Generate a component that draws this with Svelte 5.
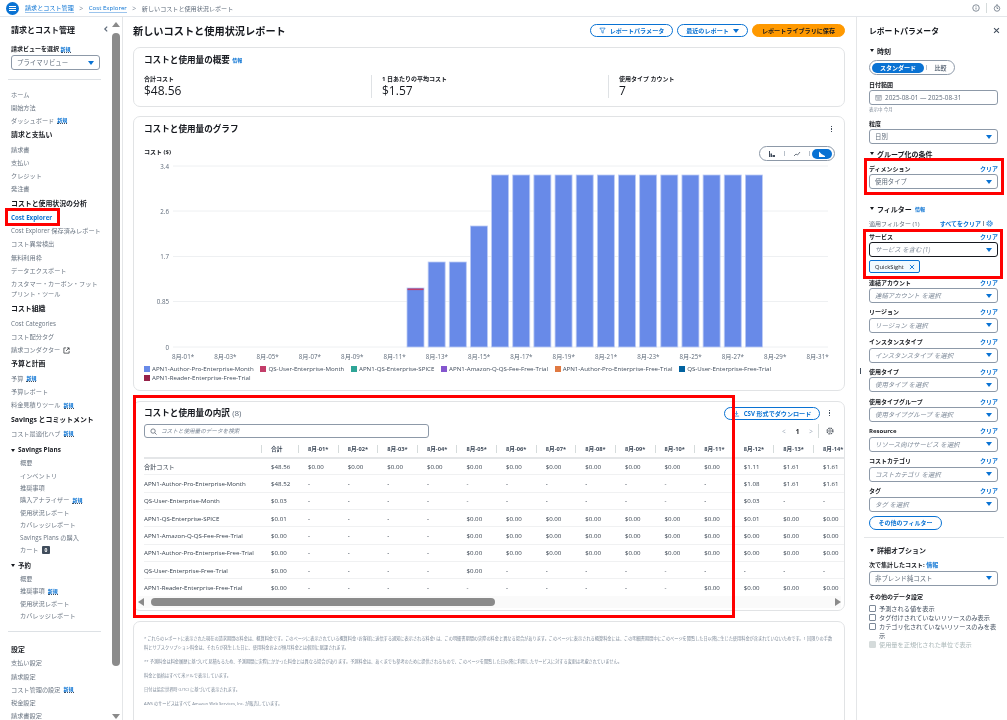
<script lang="ts">
  type NavRow = { t: string; kind?: 'head' | 'sub' | 'group' | 'active' | 'wrap'; isNew?: boolean; ext?: boolean; badge?: string };

  const nav: NavRow[] = [
    { t: 'ホーム' },
    { t: '開始方法' },
    { t: 'ダッシュボード', isNew: true },
    { t: '請求と支払い', kind: 'head' },
    { t: '請求書' },
    { t: '支払い' },
    { t: 'クレジット' },
    { t: '発注書' },
    { t: 'コストと使用状況の分析', kind: 'head' },
    { t: 'Cost Explorer', kind: 'active' },
    { t: 'Cost Explorer 保存済みレポート' },
    { t: 'コスト異常検出' },
    { t: '無料利用枠' },
    { t: 'データエクスポート' },
    { t: 'カスタマー・カーボン・フットプリント・ツール', kind: 'wrap' },
    { t: 'コスト組織', kind: 'head' },
    { t: 'Cost Categories' },
    { t: 'コスト配分タグ' },
    { t: '請求コンダクター', ext: true },
    { t: '予算と計画', kind: 'head' },
    { t: '予算', isNew: true },
    { t: '予算レポート' },
    { t: '料金見積りツール', isNew: true },
    { t: 'Savings とコミットメント', kind: 'head' },
    { t: 'コスト最適化ハブ', isNew: true },
    { t: 'Savings Plans', kind: 'group' },
    { t: '概要', kind: 'sub' },
    { t: 'インベントリ', kind: 'sub' },
    { t: '推奨事項', kind: 'sub' },
    { t: '購入アナライザー', kind: 'sub', isNew: true },
    { t: '使用状況レポート', kind: 'sub' },
    { t: 'カバレッジレポート', kind: 'sub' },
    { t: 'Savings Plans の購入', kind: 'sub' },
    { t: 'カート', kind: 'sub', badge: '0' },
    { t: '予約', kind: 'group' },
    { t: '概要', kind: 'sub' },
    { t: '推奨事項', kind: 'sub', isNew: true },
    { t: '使用状況レポート', kind: 'sub' },
    { t: 'カバレッジレポート', kind: 'sub' }
  ];

  const settings: NavRow[] = [
    { t: '支払い設定' },
    { t: '請求設定' },
    { t: 'コスト管理の設定', isNew: true },
    { t: '税金設定' },
    { t: '請求書設定' }
  ];

  const day = (n: number) => `8月-${String(n).padStart(2, '0')}*`;

  // chart
  const gridLines = [
    { label: '3.4', y: 165 },
    { label: '2.6', y: 210 },
    { label: '1.7', y: 255.5 },
    { label: '0.85', y: 300.5 },
    { label: '0', y: 346 }
  ];
  const barTops = [287, 261, 261, 225, ...Array(13).fill(174)];
  const axisDays = Array.from({ length: 16 }, (_, i) => i * 2 + 1);

  const legend = [
    ['APN1-Author-Pro-Enterprise-Month', '#688ae8'],
    ['QS-User-Enterprise-Month', '#c33d69'],
    ['APN1-QS-Enterprise-SPICE', '#2ea597'],
    ['APN1-Amazon-Q-QS-Fee-Free-Trial', '#8456ce'],
    ['APN1-Author-Pro-Enterprise-Free-Trial', '#e07941'],
    ['QS-User-Enterprise-Free-Trial', '#01629f'],
    ['APN1-Reader-Enterprise-Free-Trial', '#962249']
  ];

  // table
  const z = '$0.00';
  const d = '-';
  const rep = (v: string, n: number) => Array(n).fill(v);
  const rows = [
    ['合計コスト', '$48.56', ...rep(z, 11), '$1.11', '$1.61', '$1.61'],
    ['APN1-Author-Pro-Enterprise-Month', '$48.52', ...rep(d, 11), '$1.08', '$1.61', '$1.61'],
    ['QS-User-Enterprise-Month', '$0.03', ...rep(d, 11), '$0.03', d, d],
    ['APN1-QS-Enterprise-SPICE', '$0.01', ...rep(d, 4), ...rep(z, 7), '$0.01', z, z],
    ['APN1-Amazon-Q-QS-Fee-Free-Trial', z, ...rep(d, 4), ...rep(z, 10)],
    ['APN1-Author-Pro-Enterprise-Free-Trial', z, ...rep(d, 4), ...rep(z, 10)],
    ['QS-User-Enterprise-Free-Trial', z, ...rep(d, 4), z, ...rep(d, 9)],
    ['APN1-Reader-Enterprise-Free-Trial', z, ...rep(d, 10), ...rep(z, 4)]
  ];
  const tableDays = Array.from({ length: 14 }, (_, i) => day(i + 1));

  const filters = [
    ['連結アカウント', '連結アカウント を選択'],
    ['リージョン', 'リージョン を選択'],
    ['インスタンスタイプ', 'インスタンスタイプ を選択'],
    ['使用タイプ', '使用タイプ を選択'],
    ['使用タイプグループ', '使用タイプグループ を選択'],
    ['Resource', 'リソース向けサービス を選択'],
    ['コストカテゴリ', 'コストカテゴリ を選択'],
    ['タグ', 'タグ を選択']
  ];
</script>

{#snippet caret()}
  <i class="caret"></i>
{/snippet}

{#snippet newTag()}
  <span class="new">新規</span>
{/snippet}

{#snippet navRow(row: NavRow)}
  <li class={row.kind ?? 'item'}>
    {#if row.kind === 'group'}<i class="tri"></i>{/if}
    <span>{row.t}</span>
    {#if row.isNew}{@render newTag()}{/if}
    {#if row.ext}
      <svg class="ext" viewBox="0 0 16 16"><path d="M7 2H2v12h12V9M9 2h5v5M14 2L7 9" /></svg>
    {/if}
    {#if row.badge}<b class="badge">{row.badge}</b>{/if}
  </li>
{/snippet}

{#snippet filterField(label: string, value: string)}
  <div class="label-row"><b>{label}</b><a href="#clear">クリア</a></div>
  <div class="select"><em>{value}</em>{@render caret()}</div>
{/snippet}

<div class="page">
  <header class="topbar">
    <div class="burger"><i></i><i></i><i></i></div>
    <a class="crumb" href="#billing">請求とコスト管理</a>
    <span class="sep">&gt;</span>
    <a class="crumb" href="#ce">Cost Explorer</a>
    <span class="sep">&gt;</span>
    <span class="crumb-now">新しいコストと使用状況レポート</span>
    <div class="top-icons">
      <svg viewBox="0 0 16 16"><circle cx="8" cy="8" r="6.5" /><path d="M8 7v4M8 4.6v1.2" /></svg>
      <span class="top-div"></span>
      <svg viewBox="0 0 16 16"><circle cx="8" cy="9" r="5.5" /><path d="M8 6v3h2.5M6 2h4" /></svg>
    </div>
  </header>

  <div class="shell">
    <aside class="side">
      <div class="side-head">
        <h2>請求とコスト管理</h2>
        <svg viewBox="0 0 10 10"><path d="M6.5 2L3.5 5l3 3" /></svg>
      </div>
      <div class="view-label"><b>請求ビューを選択</b> {@render newTag()}</div>
      <div class="select view-select"><span>プライマリビュー</span>{@render caret()}</div>
      <hr />
      <ul>
        {#each nav as row}{@render navRow(row)}{/each}
      </ul>
      <hr class="hr-bottom" />
      <h3>設定</h3>
      <ul>
        {#each settings as row}{@render navRow(row)}{/each}
      </ul>
    </aside>

    <div class="side-scroll">
      <i class="arrow-up"></i>
      <div class="thumb"></div>
      <i class="arrow-down"></i>
    </div>

    <main class="main">
      <div class="title-row">
        <h1>新しいコストと使用状況レポート</h1>
        <div class="actions">
          <button class="pill btn-params">
            <svg viewBox="0 0 16 16"><path d="M2 2.5h12L9.5 8.5V14l-3-1.5v-4z" /></svg>
            レポートパラメータ
          </button>
          <button class="pill btn-recent">最近のレポート {@render caret()}</button>
          <button class="pill primary btn-save">レポートライブラリに保存</button>
        </div>
      </div>

      <section class="card summary">
        <h2>コストと使用量の概要 <a href="#info">情報</a></h2>
        <div class="kpis">
          <div><b>合計コスト</b><span>$48.56</span></div>
          <div><b>1 日あたりの平均コスト</b><span>$1.57</span></div>
          <div><b>使用タイプ カウント</b><span>7</span></div>
        </div>
      </section>

      <section class="card graph">
        <div class="card-head">
          <h2>コストと使用量のグラフ</h2>
          <span class="dots"><i></i><i></i><i></i></span>
        </div>
        <div class="graph-tools">
          <b>コスト ($)</b>
          <div class="chart-toggle">
            <span class="ct-item">
              <svg viewBox="0 0 16 16"><path class="solid" d="M2 2h2v12H2zM5 7h3v7H5zM9 10h5v4H9z" /></svg>
            </span>
            <span class="ct-div"></span>
            <span class="ct-item">
              <svg viewBox="0 0 16 16"><path d="M2 12l4-4 3 2 5-6" /></svg>
            </span>
            <span class="ct-div"></span>
            <span class="ct-item on">
              <svg viewBox="0 0 16 16"><path class="solid" d="M2 3l5 5 7 4v2H2z" /></svg>
            </span>
          </div>
        </div>
        <svg class="chart" viewBox="133 155 712 205">
          {#each gridLines as g}
            <line x1="172" x2="827" y1={g.y} y2={g.y} />
            <text class="y-label" x="168" y={g.y + 2.5}>{g.label}</text>
          {/each}
          {#each barTops as top, i}
            <rect class="bar" x={406 + i * 21.15} y={top} width="17" height={346 - top} />
          {/each}
          <rect class="bar-top" x="406.5" y="287.5" width="16" height="1.6" />
          {#each axisDays as n, i}
            <text class="x-label" x={182 + i * 42.3} y="358">{day(n)}</text>
          {/each}
        </svg>
        <div class="legend">
          {#each legend as [name, color]}
            <span><i style="background: {color}"></i>{name}</span>
          {/each}
        </div>
      </section>

      <section class="card breakdown">
        <div class="card-head">
          <h2>コストと使用量の内訳 <small>(8)</small></h2>
          <div class="head-right">
            <button class="pill btn-csv">
              <svg viewBox="0 0 16 16"><path d="M8 2v8M4.5 7L8 10.5 11.5 7M2 14h12" /></svg>
              CSV 形式でダウンロード
            </button>
            <span class="dots"><i></i><i></i><i></i></span>
          </div>
        </div>
        <div class="search-row">
          <div class="search">
            <svg viewBox="0 0 16 16"><circle cx="7" cy="7" r="5" /><path d="M11 11l4 4" /></svg>
            <em>コストと使用量のデータを検索</em>
          </div>
          <div class="pager">
            <span class="pg">&lt;</span><b>1</b><span class="pg">&gt;</span>
            <span class="pg-div"></span>
            <svg viewBox="0 0 16 16"><circle cx="8" cy="8" r="2.5" /><circle cx="8" cy="8" r="5.8" stroke-dasharray="3 1.6" stroke-width="2.6" /></svg>
          </div>
        </div>
        <div class="table-wrap">
          <table>
            <colgroup>
              <col class="c-name" /><col class="c-total" />
              {#each tableDays as _, i}<col class={i === 13 ? 'c-last' : 'c-day'} />{/each}
            </colgroup>
            <thead>
              <tr>
                <th></th>
                <th><span>合計</span></th>
                {#each tableDays as t}<th><span>{t}</span></th>{/each}
              </tr>
            </thead>
            <tbody>
              {#each rows as row}
                <tr>
                  {#each row as cell}<td>{cell}</td>{/each}
                </tr>
              {/each}
            </tbody>
          </table>
        </div>
        <div class="h-scroll">
          <i class="arrow-left"></i>
          <div class="h-thumb"></div>
          <i class="arrow-right"></i>
        </div>
      </section>

      <section class="card notes">
        <p>* これらのレポートに表示された現在の請求期間の料金は、概算料金です。このページに表示されている概算料金 (お客様に送信する通知に表示される料金) は、この明細書期間の実際の料金と異なる場合があります。このページに表示される概算料金には、この明細書期間中にこのページを閲覧した日以降に生じた使用料金が含まれていないためです。1 回限りの手数料とサブスクリプション料金は、それらが発生した日に、使用料金および傾月料金とは個別に賦課されます。</p>
        <p>** 予測料金は料金履歴に基づいて見積もるため、予測期間に実際にかかった料金とは異なる場合があります。予測料金は、あくまでも参考のために提供されるもので、このページを閲覧した日以降に利用したサービスに対する変更は考慮されていません。</p>
        <p>料金と価格はすべて米ドルで表示しています。</p>
        <p>日付は協定世界時 (UTC) に基づいて表示されます。</p>
        <p>AWS のサービスはすべて Amazon Web Services, Inc. が販売しています。</p>
      </section>
    </main>

    <aside class="panel">
      <i class="panel-handle"></i>
      <div class="panel-title">
        <h2>レポートパラメータ</h2>
        <svg viewBox="0 0 10 10"><path d="M1.5 1.5l7 7M8.5 1.5l-7 7" /></svg>
      </div>

      <h3 class="section sec-time"><i class="tri"></i>時刻</h3>
      <div class="segment"><span class="seg-on">スタンダード</span><i></i><span>比較</span></div>
      <div class="label-row lr-date"><b>日付範囲</b></div>
      <div class="select date">
        <svg viewBox="0 0 16 16"><rect x="2" y="3" width="12" height="11" /><path d="M2 6.5h12M5 9h6M5 11.5h6" /></svg>
        <span>2025-08-01 — 2025-08-31</span>
      </div>
      <div class="hint">表示中 今月</div>
      <div class="label-row lr-gran"><b>粒度</b></div>
      <div class="select"><span>日別</span>{@render caret()}</div>

      <h3 class="section sec-group"><i class="tri"></i>グループ化の条件</h3>
      <div class="label-row lr-dim"><b>ディメンション</b><a href="#clear">クリア</a></div>
      <div class="select"><span>使用タイプ</span>{@render caret()}</div>

      <h3 class="section sec-filter"><i class="tri"></i>フィルター <a href="#info">情報</a></h3>
      <div class="applied">
        <span>適用フィルター (1)</span>
        <div class="clear-all">
          <a href="#clear">すべてをクリア</a><i></i>
          <svg viewBox="0 0 16 16"><circle cx="8" cy="8" r="2.5" /><circle cx="8" cy="8" r="5.8" stroke-dasharray="3 1.6" stroke-width="2.6" /></svg>
        </div>
      </div>
      <div class="label-row lr-service"><b>サービス</b><a href="#clear">クリア</a></div>
      <div class="select focus"><em>サービス を含む (1)</em>{@render caret()}</div>
      <div class="tag">QuickSight <svg viewBox="0 0 10 10"><path d="M1.5 1.5l7 7M8.5 1.5l-7 7" /></svg></div>

      <div class="filter-list">
        {#each filters as [label, value]}
          <div class="filter">{@render filterField(label, value)}</div>
        {/each}
      </div>
      <button class="pill more">その他のフィルター</button>
      <hr />

      <h3 class="section sec-adv"><i class="tri"></i>詳細オプション</h3>
      <div class="label-row lr-agg"><b>次で集計したコスト: <a href="#info">情報</a></b></div>
      <div class="select"><span>非ブレンド純コスト</span>{@render caret()}</div>
      <div class="label-row lr-other"><b>その他のデータ設定</b></div>
      <label class="check"><i></i><span>予測される値を表示</span></label>
      <label class="check"><i></i><span>タグ付けされていないリソースのみ表示</span></label>
      <label class="check"><i></i><span>カテゴリ化されていないリソースのみを表示</span></label>
      <label class="check off"><i></i><span>使用量を正規化された単位で表示</span></label>
    </aside>
  </div>

  <!-- annotation boxes drawn over the screenshot -->
  <div class="mark mark-nav"></div>
  <div class="mark mark-table"></div>
  <div class="mark mark-dim"></div>
  <div class="mark mark-service"></div>
</div>

<style>
  :global(body) {
    margin: 0;
    background: #fff;
  }

  .page {
    position: relative;
    width: 1007px;
    height: 720px;
    overflow: hidden;
    font-family: 'Open Sans', 'Noto Sans CJK JP', sans-serif;
    font-size: 6.4px;
    color: #414d5c;
    filter: blur(0.35px);
  }

  h1,
  h2,
  h3,
  p,
  ul {
    margin: 0;
    padding: 0;
  }

  i {
    display: block;
  }

  em {
    font-style: italic;
    color: #7d8998;
  }

  a {
    color: #0972d3;
    text-decoration: none;
  }

  svg {
    fill: none;
    stroke: currentColor;
    stroke-width: 1.5;
  }

  .tri {
    width: 0;
    height: 0;
    border-left: 2.5px solid transparent;
    border-right: 2.5px solid transparent;
    border-top: 3.5px solid #16191f;
  }

  .caret {
    width: 0;
    height: 0;
    border-left: 3px solid transparent;
    border-right: 3px solid transparent;
    border-top: 4px solid #0972d3;
  }

  .new {
    color: #0972d3;
    font-size: 5px;
    font-weight: 700;
    border-bottom: 1px dotted #414d5c;
    line-height: 6px;
  }

  /* top bar */
  .topbar {
    display: flex;
    align-items: center;
    height: 16px;
    padding-left: 6px;
    border-bottom: 1px solid #e3e6ea;
    font-size: 6.1px;
  }

  .burger {
    width: 13px;
    height: 13px;
    border-radius: 50%;
    background: #0972d3;
    display: flex;
    flex-direction: column;
    align-items: center;
    justify-content: center;
    gap: 1px;
    margin-right: 6px;
  }

  .burger i {
    width: 7px;
    height: 1px;
    background: #fff;
  }

  .crumb {
    border-bottom: 1px solid #9cc4ec;
    line-height: 8px;
    margin-top: 1px;
  }

  .sep {
    margin: 0 5.5px;
    color: #7d8998;
    font-size: 7px;
  }

  .crumb-now {
    color: #5f6b7a;
    margin-top: 1px;
  }

  .top-icons {
    margin-left: auto;
    display: flex;
    align-items: center;
    gap: 6px;
    padding-right: 6px;
    color: #5f6b7a;
  }

  .top-icons svg {
    width: 8px;
    height: 8px;
  }

  .top-div {
    width: 1px;
    height: 10px;
    background: #d5dbdb;
  }

  .shell {
    display: flex;
    height: 703px;
  }

  /* left nav */
  .side {
    width: 99px;
    flex: none;
    padding: 0 0 0 11px;
    overflow: hidden;
  }

  .side-head {
    display: flex;
    justify-content: space-between;
    align-items: center;
    height: 14px;
    margin-top: 5px;
  }

  .side-head h2 {
    font-size: 8px;
    color: #16191f;
  }

  .side-head svg {
    width: 8px;
    height: 8px;
    color: #5f6b7a;
  }

  .view-label {
    margin-top: 9px;
    height: 9px;
    line-height: 9px;
    font-size: 6px;
    color: #16191f;
    white-space: nowrap;
  }

  .select {
    display: flex;
    align-items: center;
    justify-content: space-between;
    height: 15px;
    box-sizing: border-box;
    padding: 0 5px 0 5px;
    border: 1px solid #8d99a8;
    border-radius: 3px;
    background: #fff;
    font-size: 6.4px;
    color: #5f6b7a;
  }

  .view-select {
    width: 89px;
    margin-top: 1px;
  }

  .side hr {
    width: 93px;
    margin: 9px 0 0 -3px;
    border: 0;
    border-top: 1px solid #dde1e5;
  }

  .side ul {
    list-style: none;
    margin-top: 8px;
  }

  .side li {
    display: flex;
    align-items: center;
    gap: 3px;
    color: #6b7683;
    font-size: 6.2px;
    min-height: 13.2px;
    line-height: 10px;
    white-space: nowrap;
  }

  .side li.head {
    min-height: 15.6px;
    font-weight: 700;
    font-size: 6.9px;
    color: #16191f;
  }

  .side li.active {
    color: #0972d3;
    font-weight: 700;
  }

  .side li.sub {
    min-height: 12.4px;
    padding-left: 9px;
  }

  .side li.group {
    min-height: 14px;
    font-weight: 700;
    font-size: 6.4px;
    color: #16191f;
    margin-top: 2.5px;
  }

  .side li.wrap {
    white-space: normal;
    width: 90px;
    min-height: 24px;
  }

  .ext {
    width: 7px;
    height: 7px;
    color: #16191f;
  }

  .badge {
    background: #414d5c;
    color: #fff;
    font-size: 5px;
    line-height: 8px;
    padding: 0 3px;
    border-radius: 1px;
  }

  .side .hr-bottom {
    margin-top: 8.5px;
  }

  .side h3 {
    margin-top: 12.5px;
    font-size: 6.9px;
    line-height: 11px;
    color: #16191f;
  }

  .side h3 + ul {
    margin-top: 1.5px;
  }

  .side-scroll {
    position: relative;
    width: 10px;
    flex: none;
    margin-left: 1px;
    border-right: 1px solid #e4e6e8;
    display: flex;
    flex-direction: column;
    align-items: center;
    padding-right: 1px;
  }

  .arrow-up {
    margin-top: 5px;
    border-left: 4px solid transparent;
    border-right: 4px solid transparent;
    border-bottom: 5px solid #8a8a8a;
  }

  .thumb {
    width: 8px;
    height: 633px;
    margin-top: 6px;
    border-radius: 4px;
    background: #8b8b8b;
  }

  .arrow-down {
    margin-top: auto;
    margin-bottom: 1px;
    border-left: 4px solid transparent;
    border-right: 4px solid transparent;
    border-top: 5px solid #8a8a8a;
  }

  /* main column */
  .main {
    width: 712px;
    flex: none;
    padding: 0 11px 0 10px;
    overflow: hidden;
  }

  .title-row {
    display: flex;
    align-items: center;
    justify-content: space-between;
    height: 13px;
    margin-top: 7px;
  }

  .title-row h1 {
    font-size: 10.2px;
    line-height: 12px;
    color: #16191f;
    font-weight: 700;
  }

  .actions {
    display: flex;
    gap: 4px;
  }

  .pill {
    display: flex;
    align-items: center;
    justify-content: center;
    gap: 4px;
    height: 13px;
    box-sizing: border-box;
    padding: 0;
    border: 1px solid #0972d3;
    border-radius: 7px;
    background: #fff;
    color: #0972d3;
    font: 700 6.1px 'Open Sans', 'Noto Sans CJK JP', sans-serif;
    white-space: nowrap;
  }

  .pill svg {
    width: 7px;
    height: 7px;
  }

  .btn-params {
    width: 83px;
  }

  .btn-recent {
    width: 71px;
  }

  .btn-save {
    width: 93px;
  }

  .btn-csv {
    width: 96px;
  }

  .pill.primary {
    background: #ff9900;
    border-color: #ff9900;
    color: #16191f;
  }

  .card {
    box-sizing: border-box;
    border: 1px solid #e1e3e5;
    border-radius: 7px;
    background: #fff;
    padding: 5px 10px 0;
  }

  .card h2 {
    font-size: 8.6px;
    color: #16191f;
    line-height: 13px;
  }

  .card h2 a {
    font-size: 5px;
    vertical-align: 1px;
  }

  .card h2 small {
    font-size: 8px;
    font-weight: 400;
    color: #5f6b7a;
  }

  .summary {
    height: 60px;
    margin-top: 10px;
    padding-top: 6px;
  }

  .kpis {
    display: grid;
    grid-template-columns: repeat(3, 237px);
    margin-top: 8px;
  }

  .kpis div {
    display: flex;
    flex-direction: column;
  }

  .kpis div + div {
    border-left: 1px solid #dfe2e5;
    margin-left: -10px;
    padding-left: 10px;
  }

  .kpis b {
    font-size: 6px;
    line-height: 9px;
    color: #16191f;
  }

  .kpis span {
    font-size: 12px;
    line-height: 14px;
    color: #16191f;
  }

  .graph {
    height: 275px;
    margin-top: 9px;
  }

  .card-head {
    display: flex;
    justify-content: space-between;
    align-items: center;
    height: 14px;
  }

  .breakdown .card-head {
    margin-top: -1px;
  }

  .dots {
    display: flex;
    flex-direction: column;
    gap: 1px;
    margin-right: -1px;
    padding: 0 3px;
  }

  .dots i {
    width: 1.5px;
    height: 1.5px;
    background: #414d5c;
  }

  .graph-tools {
    display: flex;
    justify-content: space-between;
    align-items: center;
    height: 15px;
    margin-top: 10px;
    margin-right: -1px;
    font-size: 6px;
    color: #16191f;
  }

  .graph-tools b {
    margin-top: -5px;
  }

  .chart-toggle {
    display: flex;
    align-items: center;
    width: 76px;
    height: 15px;
    box-sizing: border-box;
    padding: 0 2px;
    border: 1px solid #8d99a8;
    border-radius: 8px;
    justify-content: space-between;
  }

  .ct-item {
    display: flex;
    justify-content: center;
    align-items: center;
    width: 20px;
    height: 10px;
    border-radius: 5px;
    color: #414d5c;
  }

  .ct-item svg {
    width: 8px;
    height: 8px;
  }

  .ct-item .solid {
    fill: currentColor;
    stroke: none;
  }

  .ct-item.on {
    background: #0972d3;
    color: #fff;
  }

  .ct-div {
    width: 1px;
    height: 5px;
    background: #b8c0c9;
  }

  .chart {
    display: block;
    width: 712px;
    height: 205px;
    margin: -5px 0 0 -10px;
    stroke: none;
    font-size: 6.2px;
  }

  .chart line {
    stroke: #eef0f2;
    stroke-width: 1;
  }

  .chart text {
    fill: #5f6b7a;
    stroke: none;
    font-family: 'Open Sans', 'Noto Sans CJK JP', sans-serif;
  }

  .y-label {
    text-anchor: end;
  }

  .x-label {
    text-anchor: middle;
  }

  .bar {
    fill: #688ae8;
    stroke: #bccbf4;
    stroke-width: 0.8;
  }

  .bar-top {
    fill: #c33d69;
    stroke: none;
  }

  .legend {
    display: flex;
    flex-wrap: wrap;
    gap: 2px 6.7px;
    margin-top: 4px;
    line-height: 7px;
    font-size: 6.15px;
    color: #414d5c;
  }

  .legend span {
    display: flex;
    align-items: center;
    gap: 2px;
    white-space: nowrap;
  }

  .legend i {
    width: 6px;
    height: 6px;
  }

  .breakdown {
    height: 210px;
    margin-top: 10px;
  }

  .head-right {
    display: flex;
    align-items: center;
    gap: 5.5px;
    margin-right: 2px;
  }

  .search-row {
    display: flex;
    justify-content: space-between;
    align-items: center;
    height: 14px;
    margin-top: 4px;
  }

  .search {
    display: flex;
    align-items: center;
    gap: 4px;
    width: 285px;
    height: 14px;
    box-sizing: border-box;
    padding-left: 5px;
    border: 1px solid #8d99a8;
    border-radius: 3px;
    font-size: 5.6px;
  }

  .search svg {
    width: 7px;
    height: 7px;
    color: #414d5c;
  }

  .pager {
    display: flex;
    align-items: center;
    gap: 10px;
    margin-right: 0;
    color: #16191f;
  }

  .pg {
    color: #9ba7b6;
  }

  .pg-div {
    width: 1px;
    height: 14px;
    margin-left: -5px;
    background: #d5dbdb;
  }

  .pager svg {
    width: 8px;
    height: 8px;
    color: #545b64;
    margin-left: -3px;
  }

  .table-wrap {
    margin: 3px -10px 0 0;
    overflow: hidden;
  }

  table {
    table-layout: fixed;
    width: 701px;
    border-collapse: collapse;
    font-size: 6.15px;
  }

  .c-name {
    width: 117px;
  }

  .c-total {
    width: 37px;
  }

  .c-day {
    width: 39.6px;
  }

  .c-last {
    width: 32px;
  }

  th {
    height: 15.5px;
    padding: 0;
    border-bottom: 2px solid #e4e6e8;
    text-align: left;
    font-weight: 700;
    font-size: 5.7px;
    color: #414d5c;
  }

  th span {
    display: block;
    padding-left: 9px;
    border-left: 1px solid #d5dbdb;
    line-height: 8px;
    white-space: nowrap;
  }

  td {
    height: 17.35px;
    padding: 0 0 0 10px;
    box-sizing: border-box;
    border-bottom: 1px solid #f0f1f2;
    white-space: nowrap;
    color: #333e4b;
  }

  td:first-child {
    padding-left: 0;
  }

  tr:last-child td {
    border-bottom: 0;
  }

  .h-scroll {
    display: flex;
    align-items: center;
    height: 12px;
    margin: 0 -7px 0 -6px;
    background: #fafafa;
  }

  .arrow-left {
    border-top: 4px solid transparent;
    border-bottom: 4px solid transparent;
    border-right: 6px solid #8a8a8a;
  }

  .h-thumb {
    width: 344px;
    height: 8px;
    margin-left: 7px;
    border-radius: 4px;
    background: #8b8b8b;
  }

  .arrow-right {
    margin-left: auto;
    border-top: 4px solid transparent;
    border-bottom: 4px solid transparent;
    border-left: 6px solid #8a8a8a;
  }

  .notes {
    height: 130px;
    margin-top: 10px;
    padding-top: 12px;
    font-size: 4.2px;
    color: #7d8998;
    line-height: 9px;
  }

  .notes p + p {
    margin-top: 5px;
  }

  /* right parameters panel */
  .panel {
    position: relative;
    box-sizing: border-box;
    width: 150px;
    flex: none;
    padding: 6px 8px 0 12px;
    border-left: 1px solid #e4e6e8;
    overflow: hidden;
  }

  .panel-handle {
    position: absolute;
    left: 3px;
    top: 351px;
    width: 1px;
    height: 6px;
    background: #414d5c;
  }

  .panel-title {
    display: flex;
    justify-content: space-between;
    align-items: center;
    height: 14px;
  }

  .panel-title h2 {
    font-size: 7.8px;
    color: #16191f;
  }

  .panel-title svg {
    width: 7px;
    height: 7px;
    margin-right: -2px;
    color: #414d5c;
  }

  .section {
    display: flex;
    align-items: center;
    gap: 3px;
    height: 11px;
    font-size: 7px;
    color: #16191f;
    margin-left: 1px;
  }

  .section a {
    font-size: 5px;
  }

  .sec-time {
    margin-top: 8px;
  }

  .sec-group {
    margin-top: 4px;
  }

  .sec-filter {
    margin-top: 14px;
  }

  .sec-adv {
    margin-top: 7px;
  }

  .segment {
    display: flex;
    align-items: center;
    width: 86px;
    height: 15px;
    box-sizing: border-box;
    margin-top: 4px;
    padding: 0 2px;
    border: 1px solid #8d99a8;
    border-radius: 8px;
    font-weight: 700;
    font-size: 6px;
    color: #5f6b7a;
  }

  .segment span {
    flex: 1;
    text-align: center;
  }

  .segment i {
    width: 1px;
    height: 5px;
    margin: 0 2px;
    background: #b8c0c9;
  }

  .seg-on {
    flex: none !important;
    width: 52px;
    line-height: 10px;
    border-radius: 5px;
    background: #0972d3;
    color: #fff;
  }

  .label-row {
    display: flex;
    justify-content: space-between;
    align-items: center;
    height: 10px;
    margin-bottom: 1px;
    font-size: 6px;
    color: #16191f;
  }

  .label-row a {
    font-weight: 700;
  }

  .lr-date {
    margin-top: 4px;
  }

  .lr-gran {
    margin-top: 5px;
  }

  .lr-dim {
    margin-top: 4px;
  }

  .lr-service {
    margin-top: 3px;
  }

  .lr-agg {
    margin-top: 4px;
  }

  .lr-other {
    margin-top: 6px;
    margin-bottom: 2px;
  }

  .date {
    justify-content: flex-start;
    gap: 3px;
  }

  .date svg {
    width: 7px;
    height: 7px;
    stroke-width: 1.2;
  }

  .hint {
    margin-top: 1px;
    height: 7px;
    line-height: 7px;
    font-size: 4.5px;
    color: #7d8998;
  }

  .applied {
    display: flex;
    justify-content: space-between;
    align-items: center;
    height: 10px;
    margin-top: 4px;
    font-size: 6px;
    color: #5f6b7a;
  }

  .clear-all {
    display: flex;
    align-items: center;
    gap: 1.5px;
    margin-right: 5px;
    font-weight: 700;
  }

  .clear-all i {
    width: 1px;
    height: 5px;
    background: #7d8998;
  }

  .clear-all svg {
    width: 7px;
    height: 7px;
    color: #0972d3;
    margin-left: 1px;
  }

  .select.focus {
    border-color: #16191f;
  }

  .tag {
    display: flex;
    align-items: center;
    justify-content: space-between;
    width: 51px;
    height: 13px;
    box-sizing: border-box;
    margin-top: 3px;
    padding: 0 4px 0 5px;
    border: 1px solid #0972d3;
    border-radius: 2px;
    background: #f1faff;
    font-size: 5.8px;
    color: #16191f;
  }

  .tag svg {
    width: 6px;
    height: 6px;
    color: #0972d3;
  }

  .filter-list {
    margin-top: 4px;
  }

  .filter {
    height: 29.8px;
  }

  .pill.more {
    width: 73px;
    height: 14px;
    margin-top: 0.5px;
    font-size: 6px;
  }

  .panel hr {
    margin: 7px -6px 0 -5px;
    border: 0;
    border-top: 1px solid #e4e6e8;
  }

  .check {
    display: flex;
    gap: 3px;
    line-height: 9px;
    font-size: 6.2px;
    color: #414d5c;
    width: 130px;
  }

  .check i {
    flex: none;
    width: 7px;
    height: 7px;
    margin-top: 1px;
    box-sizing: border-box;
    border: 1px solid #7d8998;
    border-radius: 1px;
  }

  .check.off {
    color: #aab7b8;
  }

  .check.off i {
    background: #d5dbdb;
    border-color: #d5dbdb;
  }

  /* red annotations */
  .mark {
    position: absolute;
    box-sizing: border-box;
    border: 3px solid #ff0000;
    pointer-events: none;
  }

  .mark-nav {
    left: 5px;
    top: 208px;
    width: 55px;
    height: 18px;
  }

  .mark-table {
    left: 133px;
    top: 395px;
    width: 602px;
    height: 223px;
  }

  .mark-dim {
    left: 864px;
    top: 158px;
    width: 140px;
    height: 37px;
  }

  .mark-service {
    left: 863px;
    top: 229px;
    width: 140px;
    height: 50px;
  }
</style>
